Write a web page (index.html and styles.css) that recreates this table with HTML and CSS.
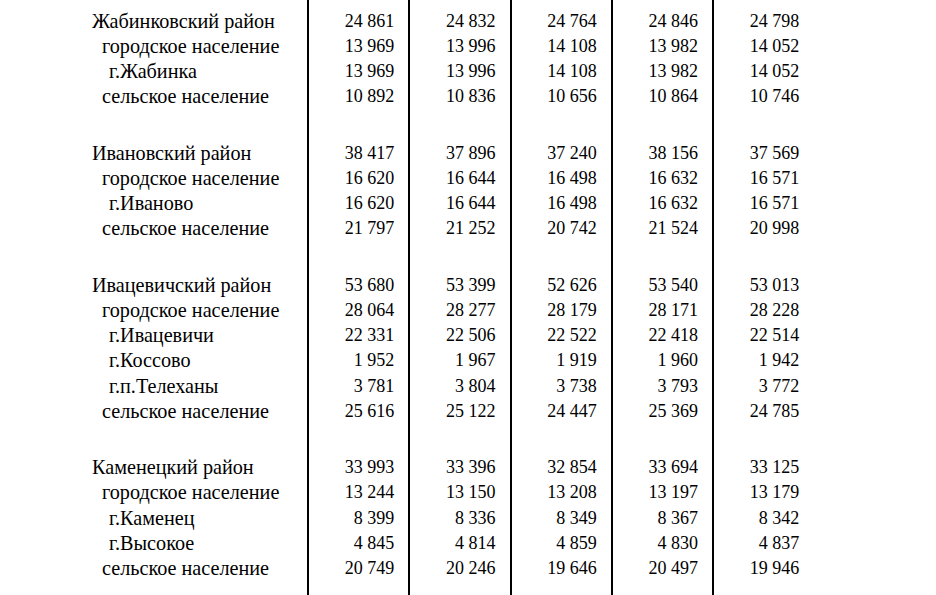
FILE: index.html
```html
<!DOCTYPE html>
<html>
<head>
<meta charset="utf-8">
<title>Население по районам</title>
<link rel="stylesheet" href="styles.css">
</head>
<body>
<table class="stats">
  <colgroup>
    <col class="c-label"><col class="c-num"><col class="c-num"><col class="c-num"><col class="c-num"><col class="c-num">
  </colgroup>
  <tbody>
    <tr class="spacer-top"><td></td><td></td><td></td><td></td><td></td><td></td></tr>

    <tr><td class="lbl l1">Жабинковский район</td><td>24 861</td><td>24 832</td><td>24 764</td><td>24 846</td><td>24 798</td></tr>
    <tr><td class="lbl l2">городское население</td><td>13 969</td><td>13 996</td><td>14 108</td><td>13 982</td><td>14 052</td></tr>
    <tr><td class="lbl l3">г.Жабинка</td><td>13 969</td><td>13 996</td><td>14 108</td><td>13 982</td><td>14 052</td></tr>
    <tr><td class="lbl l2">сельское население</td><td>10 892</td><td>10 836</td><td>10 656</td><td>10 864</td><td>10 746</td></tr>
    <tr class="gap"><td></td><td></td><td></td><td></td><td></td><td></td></tr>

    <tr><td class="lbl l1">Ивановский район</td><td>38 417</td><td>37 896</td><td>37 240</td><td>38 156</td><td>37 569</td></tr>
    <tr><td class="lbl l2">городское население</td><td>16 620</td><td>16 644</td><td>16 498</td><td>16 632</td><td>16 571</td></tr>
    <tr><td class="lbl l3">г.Иваново</td><td>16 620</td><td>16 644</td><td>16 498</td><td>16 632</td><td>16 571</td></tr>
    <tr><td class="lbl l2">сельское население</td><td>21 797</td><td>21 252</td><td>20 742</td><td>21 524</td><td>20 998</td></tr>
    <tr class="gap"><td></td><td></td><td></td><td></td><td></td><td></td></tr>

    <tr><td class="lbl l1">Ивацевичский район</td><td>53 680</td><td>53 399</td><td>52 626</td><td>53 540</td><td>53 013</td></tr>
    <tr><td class="lbl l2">городское население</td><td>28 064</td><td>28 277</td><td>28 179</td><td>28 171</td><td>28 228</td></tr>
    <tr><td class="lbl l3">г.Ивацевичи</td><td>22 331</td><td>22 506</td><td>22 522</td><td>22 418</td><td>22 514</td></tr>
    <tr><td class="lbl l3">г.Коссово</td><td>1 952</td><td>1 967</td><td>1 919</td><td>1 960</td><td>1 942</td></tr>
    <tr><td class="lbl l3">г.п.Телеханы</td><td>3 781</td><td>3 804</td><td>3 738</td><td>3 793</td><td>3 772</td></tr>
    <tr><td class="lbl l2">сельское население</td><td>25 616</td><td>25 122</td><td>24 447</td><td>25 369</td><td>24 785</td></tr>
    <tr class="gap"><td></td><td></td><td></td><td></td><td></td><td></td></tr>

    <tr><td class="lbl l1">Каменецкий район</td><td>33 993</td><td>33 396</td><td>32 854</td><td>33 694</td><td>33 125</td></tr>
    <tr><td class="lbl l2">городское население</td><td>13 244</td><td>13 150</td><td>13 208</td><td>13 197</td><td>13 179</td></tr>
    <tr><td class="lbl l3">г.Каменец</td><td>8 399</td><td>8 336</td><td>8 349</td><td>8 367</td><td>8 342</td></tr>
    <tr><td class="lbl l3">г.Высокое</td><td>4 845</td><td>4 814</td><td>4 859</td><td>4 830</td><td>4 837</td></tr>
    <tr><td class="lbl l2">сельское население</td><td>20 749</td><td>20 246</td><td>19 646</td><td>20 497</td><td>19 946</td></tr>
    <tr class="gap"><td></td><td></td><td></td><td></td><td></td><td></td></tr>
  </tbody>
</table>
</body>
</html>
```
FILE: styles.css
```css
html, body {
  margin: 0;
  padding: 0;
  background: #fff;
}

body {
  font-family: "Liberation Serif";
  color: #000;
}

.stats {
  border-collapse: separate;
  border-spacing: 0;
  table-layout: fixed;
  margin-left: 86px;
  width: 727.25px;
}

.c-label { width: 221px; }
.c-num { width: 101.25px; }

.stats td {
  font-family: "Liberation Serif";
  font-size: 18px;
  height: 25.25px;
  padding: 0 14px 0 0;
  line-height: 25px;
  white-space: nowrap;
  text-align: right;
  vertical-align: middle;
}

.stats td + td {
  border-left: 2px solid #000;
}

.stats td.lbl {
  font-size: 20.2px;
  text-align: left;
  padding-right: 0;
}

.stats td.l1 { padding-left: 6px; }
.stats td.l2 { padding-left: 16px; }
.stats td.l3 { padding-left: 23px; }

.stats .spacer-top td { height: 8.4px; }
.stats .gap td { height: 31px; }
```
